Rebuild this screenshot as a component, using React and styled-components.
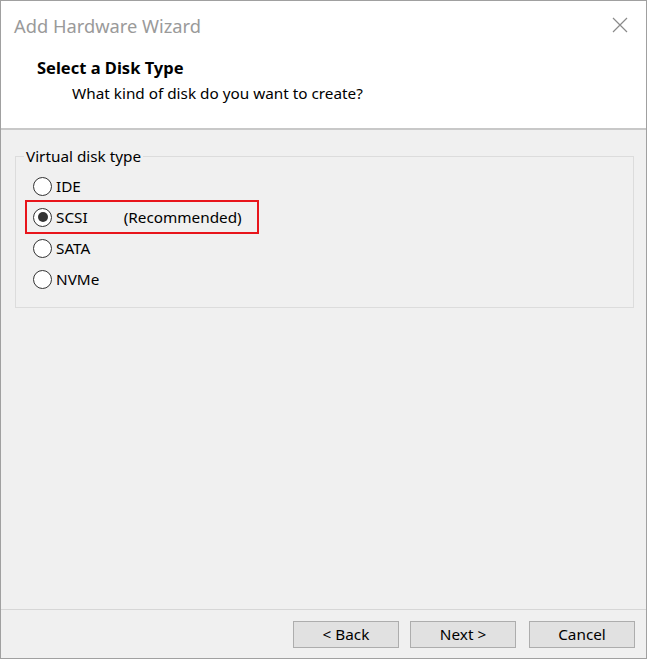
import React from 'react';
import styled, { createGlobalStyle } from 'styled-components';

const GlobalStyle = createGlobalStyle`
  html, body {
    margin: 0;
    padding: 0;
    background: #ffffff;
  }
  body {
    font-family: "Noto Sans", "Open Sans", "Liberation Sans", sans-serif;
    color: #000000;
  }
`;

const Window = styled.div`
  box-sizing: border-box;
  width: 647px;
  height: 659px;
  border: 1px solid #a0a0a0;
  display: flex;
  flex-direction: column;
  background: #f0f0f0;
`;

const Header = styled.div`
  background: #ffffff;
  height: 127px;
  border-bottom: 2px solid #c8c8c8;
  display: flex;
  flex-direction: column;
  flex-shrink: 0;
`;

const TitleBar = styled.div`
  height: 48px;
  display: flex;
  align-items: center;
  justify-content: space-between;
  padding: 0 16px 0 13px;
`;

const Title = styled.span`
  font-size: 18.3px;
  color: #9a9a9a;
`;

const CloseButton = styled.span`
  display: flex;
  width: 20px;
  height: 20px;
  align-items: center;
  justify-content: center;
`;

const Heading = styled.div`
  font-size: 16.5px;
  font-weight: 700;
  margin: 9px 0 0 36px;
  line-height: 20px;
`;

const Subheading = styled.div`
  font-size: 15.3px;
  margin: 5px 0 0 71px;
  line-height: 20px;
`;

const Body = styled.div`
  flex: 1;
  padding: 17px 12px 0 14px;
`;

const Group = styled.fieldset`
  margin: 0;
  padding: 10px 0 17px 15px;
  border: 1px solid #dcdcdc;
  min-width: 0;
  display: flex;
  flex-direction: column;
  gap: 9px;
`;

const Legend = styled.legend`
  font-size: 15.3px;
  padding: 0 2px;
  margin-left: -7px;
  line-height: 18px;
`;

const Option = styled.label`
  display: flex;
  align-items: center;
  height: 22px;
  font-size: 15.3px;
  line-height: 20px;
  width: fit-content;
  padding: 0 11px 0 2px;
  outline: ${p => (p.$highlight ? '2px solid #e8151b' : 'none')};
  outline-offset: 4px;
`;

const Radio = styled.span`
  box-sizing: border-box;
  width: 19px;
  height: 19px;
  border-radius: 50%;
  border: 1px solid #333333;
  background: #ffffff;
  display: flex;
  align-items: center;
  justify-content: center;
  margin-right: 4px;
  &::after {
    content: '';
    width: 10px;
    height: 10px;
    border-radius: 50%;
    background: ${p => (p.$checked ? '#333333' : 'transparent')};
  }
`;

const Note = styled.span`
  margin-left: 36px;
`;

const Footer = styled.div`
  height: 48px;
  border-top: 1px solid #d6d6d6;
  display: flex;
  justify-content: flex-end;
  align-items: center;
  gap: 11px;
  padding: 0 11px 0 0;
  flex-shrink: 0;
`;

const Button = styled.button`
  box-sizing: border-box;
  width: 106px;
  height: 27px;
  background: #e1e1e1;
  border: 1px solid #adadad;
  font-family: inherit;
  font-size: 15.3px;
  color: #000000;
  padding: 0;
  margin-left: ${p => p.$extra || 0};
`;

const options = [
  { label: 'IDE' },
  { label: 'SCSI', checked: true, note: '(Recommended)' },
  { label: 'SATA' },
  { label: 'NVMe' },
];

export default function App() {
  return (
    <>
      <GlobalStyle />
      <Window>
        <Header>
          <TitleBar>
            <Title>Add Hardware Wizard</Title>
            <CloseButton>
              <svg width="16" height="16" viewBox="0 0 16 16">
                <path d="M1 1 L15 15 M15 1 L1 15" stroke="#8a8a8a" strokeWidth="1.2" fill="none" />
              </svg>
            </CloseButton>
          </TitleBar>
          <Heading>Select a Disk Type</Heading>
          <Subheading>What kind of disk do you want to create?</Subheading>
        </Header>
        <Body>
          <Group>
            <Legend>Virtual disk type</Legend>
            {options.map(o => (
              <Option key={o.label} $highlight={o.checked}>
                <Radio $checked={o.checked} />
                {o.label}
                {o.note && <Note>{o.note}</Note>}
              </Option>
            ))}
          </Group>
        </Body>
        <Footer>
          <Button>&lt; Back</Button>
          <Button>Next &gt;</Button>
          <Button $extra="2px">Cancel</Button>
        </Footer>
      </Window>
    </>
  );
}
